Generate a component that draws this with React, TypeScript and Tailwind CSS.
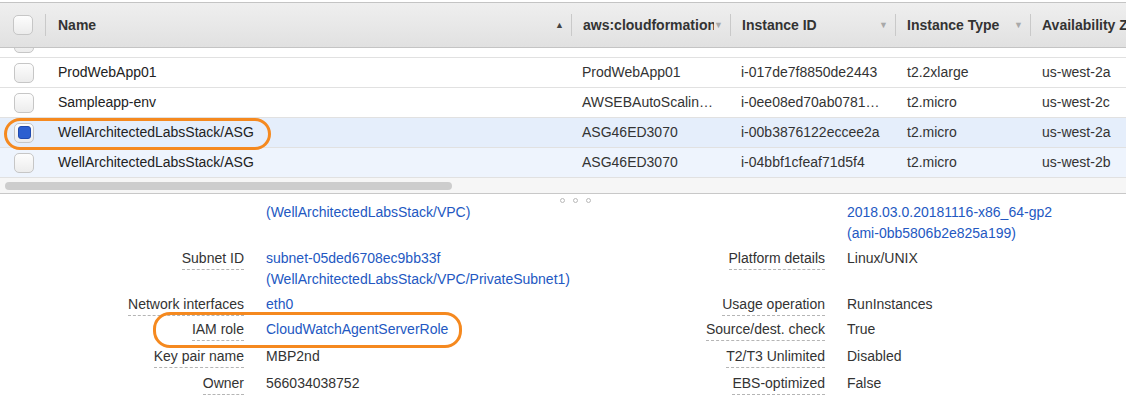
import React from "react";

type Row = {
  name: string;
  stack: string;
  id: string;
  type: string;
  az: string;
  checked?: boolean;
  bg?: string;
};

const rows: Row[] = [
  { name: "ProdWebApp01", stack: "ProdWebApp01", id: "i-017de7f8850de2443", type: "t2.2xlarge", az: "us-west-2a" },
  { name: "Sampleapp-env", stack: "AWSEBAutoScalin…", id: "i-0ee08ed70ab0781…", type: "t2.micro", az: "us-west-2c" },
  { name: "WellArchitectedLabsStack/ASG", stack: "ASG46ED3070", id: "i-00b3876122eccee2a", type: "t2.micro", az: "us-west-2a", checked: true, bg: "bg-[#e5eefb]" },
  { name: "WellArchitectedLabsStack/ASG", stack: "ASG46ED3070", id: "i-04bbf1cfeaf71d5f4", type: "t2.micro", az: "us-west-2b", bg: "bg-[#eef4fd]" },
];

const Checkbox = ({ checked }: { checked?: boolean }) => (
  <div className="w-[20px] h-[20px] rounded-[5px] border border-[#c6c6c6] bg-gradient-to-b from-[#fdfdfd] to-[#ececec] flex items-center justify-center">
    {checked && <div className="w-[13px] h-[13px] rounded-[3px] bg-[#2c5fd0] border border-[#1f4ab0]" />}
  </div>
);

const Divider = () => <div className="w-px h-[22px] bg-[#c9c9c9] shrink-0" />;

const Caret = () => <span className="text-[9px] text-[#a9a9a9] leading-none">▼</span>;

const DataRow = ({ r }: { r: Row }) => (
  <div className={`flex h-[30px] items-center border-b border-[#e1e1e1] ${r.bg || "bg-white"}`}>
    <div className="w-[46px] pl-[14px] shrink-0">
      <Checkbox checked={r.checked} />
    </div>
    <div className="w-[526px] pl-[12px] shrink-0 text-[#222]">{r.name}</div>
    <div className="w-[159px] pl-[10px] shrink-0 text-[#333] whitespace-nowrap">{r.stack}</div>
    <div className="w-[165px] pl-[10px] shrink-0 text-[#333] whitespace-nowrap">{r.id}</div>
    <div className="w-[135px] pl-[11px] shrink-0 text-[#333]">{r.type}</div>
    <div className="pl-[11px] shrink-0 text-[#333]">{r.az}</div>
  </div>
);

type Field = { label?: string; values: { text: string; link?: boolean }[] };

const FieldView = ({ f, labelW }: { f?: Field; labelW: string }) => (
  <div className="flex">
    <div className={`${labelW} shrink-0 text-right`}>
      {f?.label && (
        <span className="inline-block leading-[21px] border-b border-dashed border-[#b5b5b5] text-[#333]">{f.label}</span>
      )}
    </div>
    <div className="pl-[22px]">
      {f?.values.map((v, i) => (
        <div key={i} className={`leading-[21px] whitespace-nowrap ${v.link ? "text-[#2358c2]" : "text-[#333]"}`}>
          {v.text}
        </div>
      ))}
    </div>
  </div>
);

const detailRows: { left?: Field; right?: Field; h: string }[] = [
  {
    left: { values: [{ text: "(WellArchitectedLabsStack/VPC)", link: true }] },
    right: { values: [{ text: "2018.03.0.20181116-x86_64-gp2", link: true }, { text: "(ami-0bb5806b2e825a199)", link: true }] },
    h: "h-[46px]",
  },
  {
    left: { label: "Subnet ID", values: [{ text: "subnet-05ded6708ec9bb33f", link: true }, { text: "(WellArchitectedLabsStack/VPC/PrivateSubnet1)", link: true }] },
    right: { label: "Platform details", values: [{ text: "Linux/UNIX" }] },
    h: "h-[46px]",
  },
  {
    left: { label: "Network interfaces", values: [{ text: "eth0", link: true }] },
    right: { label: "Usage operation", values: [{ text: "RunInstances" }] },
    h: "h-[25px]",
  },
  {
    left: { label: "IAM role", values: [{ text: "CloudWatchAgentServerRole", link: true }] },
    right: { label: "Source/dest. check", values: [{ text: "True" }] },
    h: "h-[27px]",
  },
  {
    left: { label: "Key pair name", values: [{ text: "MBP2nd" }] },
    right: { label: "T2/T3 Unlimited", values: [{ text: "Disabled" }] },
    h: "h-[27px]",
  },
  {
    left: { label: "Owner", values: [{ text: "566034038752" }] },
    right: { label: "EBS-optimized", values: [{ text: "False" }] },
    h: "h-[27px]",
  },
];

export default function App() {
  return (
    <div className="relative w-[1126px] h-[402px] overflow-hidden bg-white font-['Liberation_Sans',Arial,sans-serif] text-[14px]">
      {/* table */}
      <div className="pt-[2px]">
        <div className="flex h-[46px] items-center border-y border-[#c4c4c4] bg-gradient-to-b from-[#efefef] to-[#e1e1e1] font-bold text-[#333] whitespace-nowrap">
          <div className="w-[45px] pl-[13px] shrink-0">
            <Checkbox />
          </div>
          <Divider />
          <div className="w-[525px] pl-[12px] pr-[7px] shrink-0 flex items-center">
            <span className="flex-1">Name</span>
            <span className="text-[9px] text-[#444] leading-none">▲</span>
          </div>
          <Divider />
          <div className="w-[158px] pl-[11px] pr-[7px] shrink-0 flex items-center overflow-hidden">
            <span className="w-[131px] overflow-hidden shrink-0">aws:cloudformation:stack-name</span>
            <Caret />
          </div>
          <Divider />
          <div className="w-[164px] pl-[11px] pr-[7px] shrink-0 flex items-center">
            <span className="flex-1">Instance ID</span>
            <Caret />
          </div>
          <Divider />
          <div className="w-[134px] pl-[11px] pr-[7px] shrink-0 flex items-center">
            <span className="flex-1">Instance Type</span>
            <Caret />
          </div>
          <Divider />
          <div className="pl-[11px] shrink-0">Availability Zone</div>
        </div>

        {/* partially scrolled row */}
        <div className="h-[10px] overflow-hidden border-b border-[#e1e1e1] text-[#333]">
          <div className="-mt-[20px] flex h-[30px] items-center">
            <div className="w-[46px] pl-[14px] shrink-0">
              <Checkbox />
            </div>
            <div className="w-[526px] pl-[12px] shrink-0 -mt-[7px]">ProdWebApp02</div>
            <div className="w-[159px] pl-[10px] shrink-0 -mt-[7px]">ProdWebApp02</div>
            <div className="w-[165px] pl-[10px] shrink-0 -mt-[7px]">i-0a1b2c3d4e5f60718</div>
            <div className="w-[135px] pl-[11px] shrink-0 -mt-[7px]">t2.2xlarge</div>
            <div className="pl-[11px] shrink-0 -mt-[7px]">us-west-2a</div>
          </div>
        </div>

        {rows.map((r, i) => (
          <DataRow key={i} r={r} />
        ))}

        {/* horizontal scrollbar */}
        <div className="h-[16px] bg-[#f6f6f6] border-b border-[#c8c8c8] flex items-center pl-[5px]">
          <div className="w-[447px] h-[8px] rounded-full bg-[#cdcdcd]" />
        </div>
      </div>

      {/* details */}
      <div className="relative pt-[8px] text-[14px]">
        <div className="absolute left-[560px] top-[4px] flex gap-[8px]">
          <div className="w-[5px] h-[5px] rounded-full border border-[#b9b9b9]" />
          <div className="w-[5px] h-[5px] rounded-full border border-[#b9b9b9]" />
          <div className="w-[5px] h-[5px] rounded-full border border-[#b9b9b9]" />
        </div>
        {detailRows.map((d, i) => (
          <div key={i} className={`flex ${d.h}`}>
            <div className="w-[603px] shrink-0">
              <FieldView f={d.left} labelW="w-[244px]" />
            </div>
            <div>
              <FieldView f={d.right} labelW="w-[222px]" />
            </div>
          </div>
        ))}
      </div>

      {/* highlight ovals */}
      <div className="absolute left-[4px] top-[118px] w-[267px] h-[32px] rounded-[16px] border-[3px] border-[#f5891f]" />
      <div className="absolute left-[153px] top-[312px] w-[309px] h-[36px] rounded-[17px] border-[3px] border-[#f5891f]" />
    </div>
  );
}
